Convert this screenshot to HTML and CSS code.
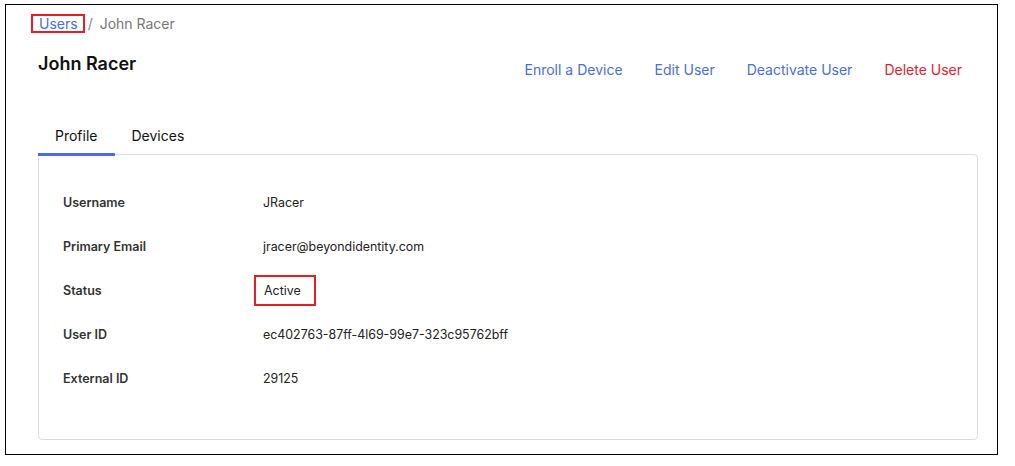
FILE: index.html
```html
<!DOCTYPE html>
<html>
<head>
<meta charset="utf-8">
<link rel="stylesheet" href="styles.css">
</head>
<body>
<div class="frame">
  <nav class="crumbs">
    <a class="crumb-link">Users</a>
    <span class="crumb-sep">/</span>
    <span class="crumb-current">John Racer</span>
  </nav>
  <header class="head">
    <h1 class="title">John Racer</h1>
    <div class="actions">
      <a class="action">Enroll a Device</a>
      <a class="action">Edit User</a>
      <a class="action">Deactivate User</a>
      <a class="action danger">Delete User</a>
    </div>
  </header>
  <div class="tabs">
    <div class="tab active">Profile</div>
    <div class="tab">Devices</div>
  </div>
  <section class="card">
    <div class="row"><div class="label">Username</div><div class="value">JRacer</div></div>
    <div class="row"><div class="label">Primary Email</div><div class="value">jracer@beyondidentity.com</div></div>
    <div class="row"><div class="label">Status</div><div class="value"><span class="status">Active</span></div></div>
    <div class="row"><div class="label">User ID</div><div class="value">ec402763-87ff-4l69-99e7-323c95762bff</div></div>
    <div class="row"><div class="label">External ID</div><div class="value">29125</div></div>
  </section>
</div>
</body>
</html>
```
FILE: styles.css
```css
* { box-sizing: border-box; }
html, body { margin: 0; padding: 0; background: #fff; }
body {
  font-family: "Inter", "Roboto", sans-serif;
  color: #1e1e1e;
}
.frame {
  margin: 4px 0 0 5px;
  width: 993px;
  height: 451px;
  border: 1px solid #000;
  padding: 8px 20px 0 32px;
}
.crumbs {
  display: flex;
  align-items: center;
  font-size: 14px;
  height: 20px;
}
.crumb-link {
  color: #4a6fd6;
  border: 2px solid #e41e26;
  padding: 0 5px 0 6px;
  margin-left: -7px;
  line-height: 15px;
}
.crumb-sep { color: #888; margin: 0 7px 0 3px; }
.crumb-current { color: #777; }
.head {
  display: flex;
  justify-content: space-between;
  align-items: flex-start;
  margin-top: 19px;
}
.title {
  margin: 0;
  font-size: 18px;
  font-weight: 600;
  line-height: 24px;
  color: #111;
}
.actions {
  display: flex;
  gap: 32px;
  margin-top: 8px;
  padding-right: 15px;
}
.action {
  color: #4a6fd6;
  font-size: 14px;
  line-height: 20px;
}
.action.danger { color: #d9262e; }
.tabs {
  display: flex;
  margin-top: 40px;
  position: relative;
  z-index: 1;
}
.tab {
  font-size: 14px;
  line-height: 20px;
  padding: 6px 17px 7px 17px;
  color: #111;
  border-bottom: 3px solid transparent;
}
.tab.active { border-bottom-color: #4a6fd6; }
.card {
  margin-top: -2px;
  width: 940px;
  height: 286px;
  border: 1px solid #dcdcdc;
  border-radius: 4px;
  padding: 25px 24px 0 24px;
}
.row {
  display: flex;
  align-items: center;
  height: 44px;
}
.label {
  width: 200px;
  font-size: 12.5px;
  font-weight: 600;
  color: #333;
}
.value {
  font-size: 12.4px;
  color: #222;
}
.status {
  display: inline-block;
  border: 2px solid #e41e26;
  padding: 6px 13px 5px 8px;
  margin-left: -9px;
  line-height: 16px;
}
```
